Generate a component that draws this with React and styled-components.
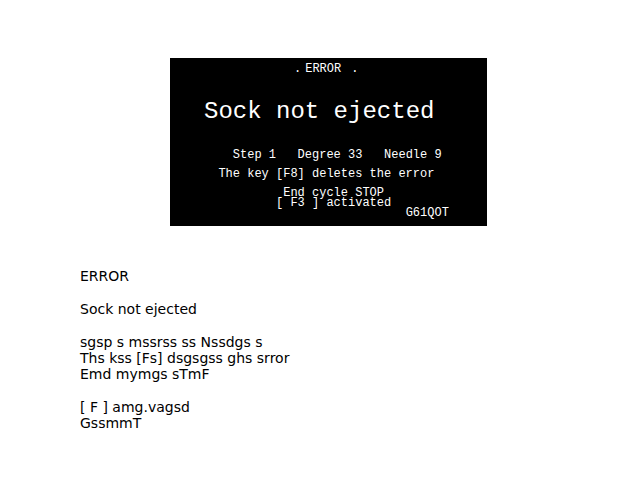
import React from "react";
import styled, { createGlobalStyle } from "styled-components";

const GlobalStyle = createGlobalStyle`
  * { box-sizing: border-box; }
  body { margin: 0; background: #fff; color: #000; }
`;

const Page = styled.main`
  display: flex;
  flex-direction: column;
  gap: 42px;
  padding: 58px 80px 40px;
`;

const Display = styled.section`
  display: flex;
  flex-direction: column;
  min-width: 300px;
  margin: 0 73px 0 90px;
  padding: 6px 0 8px 34px;
  background: #000;
  color: #fff;
  font-family: "Liberation Mono", monospace;
  font-size: 12px;
  line-height: 10px;
`;

const Heading = styled.div`
  display: flex;
  padding-left: 90px;
`;

const HeadingText = styled.span`
  margin: 0 10px 0 4px;
`;

const Title = styled.h1`
  margin: 26px 0;
  font-size: 24px;
  font-weight: 400;
  line-height: 24px;
  white-space: nowrap;
`;

const Row = styled.div`
  padding-left: ${({ $column }) => $column}ch;
  margin-bottom: ${({ $spaced }) => ($spaced ? 9 : 0)}px;
  white-space: pre;
`;

const Transcript = styled.section`
  display: flex;
  flex-direction: column;
  gap: 17px;
  font-family: "DejaVu Sans", sans-serif;
  font-size: 14px;
  line-height: 16px;
`;

const Paragraph = styled.p`
  margin: 0;
  white-space: pre-line;
`;

const rows = [
  { text: "Step 1   Degree 33   Needle 9", column: 4, spaced: true },
  { text: "The key [F8] deletes the error", column: 2, spaced: true },
  { text: "End cycle STOP", column: 11 },
  { text: "[ F3 ] activated", column: 10 },
  { text: "G61QOT", column: 28 },
];

const paragraphs = [
  "ERROR",
  "Sock not ejected",
  "sgsp s mssrss ss Nssdgs s\nThs kss [Fs] dsgsgss ghs srror\nEmd mymgs sTmF",
  "[ F ] amg.vagsd\nGssmmT",
];

export default function App() {
  return (
    <>
      <GlobalStyle />
      <Page>
        <Display>
          <Heading>
            <span>.</span>
            <HeadingText>ERROR</HeadingText>
            <span>.</span>
          </Heading>
          <Title>Sock not ejected</Title>
          {rows.map((row) => (
            <Row key={row.text} $column={row.column} $spaced={row.spaced}>
              {row.text}
            </Row>
          ))}
        </Display>
        <Transcript>
          {paragraphs.map((text) => (
            <Paragraph key={text}>{text}</Paragraph>
          ))}
        </Transcript>
      </Page>
    </>
  );
}
